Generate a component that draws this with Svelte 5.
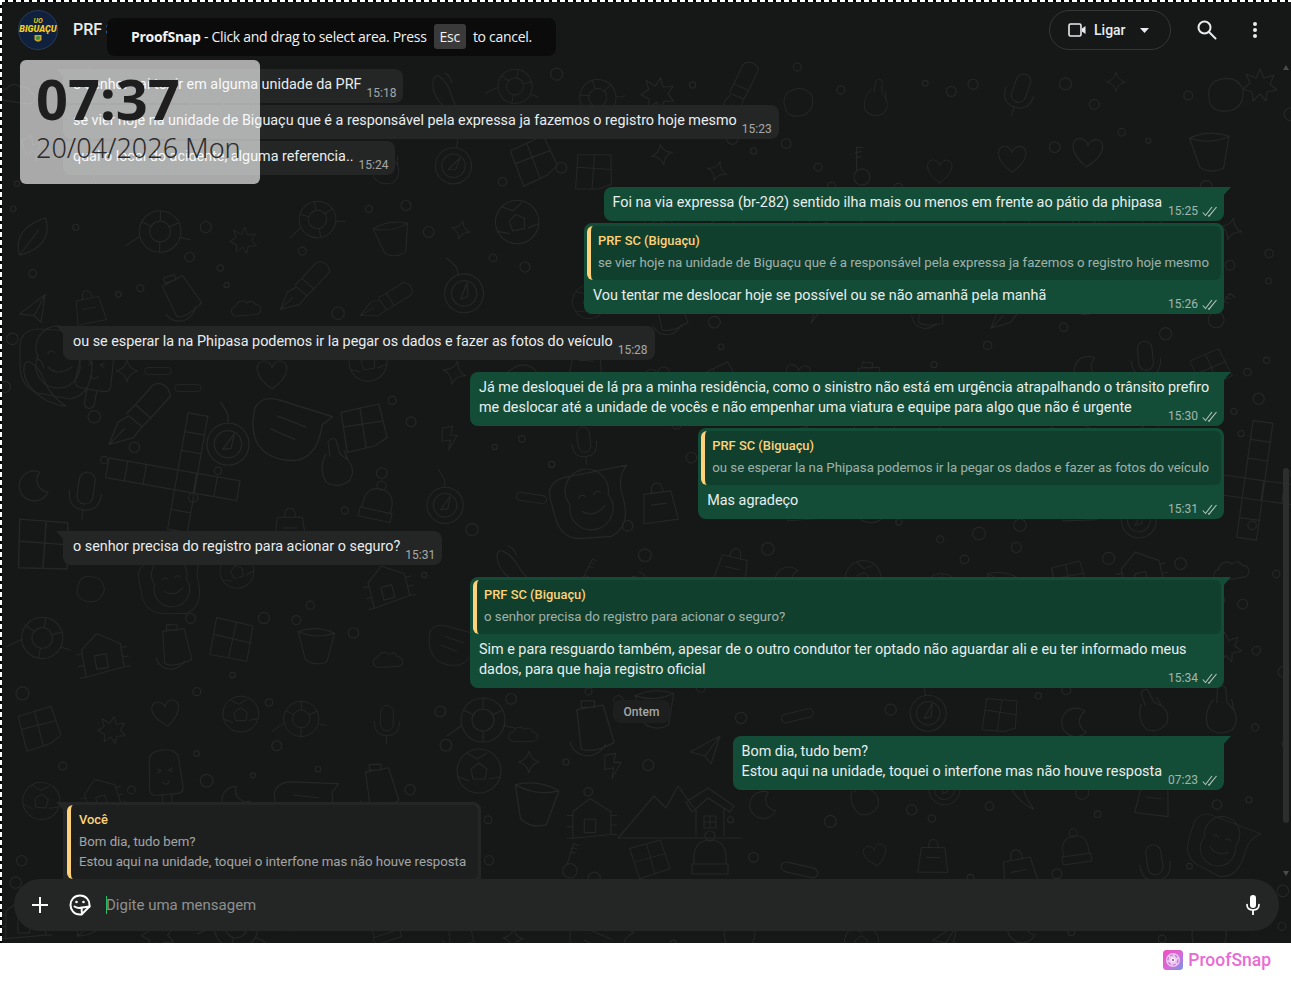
<script>
  const messages = [
    { side: 'in', tail: true, lines: ['o senhor vai ter ir em alguma unidade da PRF'], time: '15:18' },
    { side: 'in', lines: ['se vier hoje na unidade de Biguaçu que é a responsável pela expressa ja fazemos o registro hoje mesmo'], time: '15:23' },
    { side: 'in', lines: ['qual o local do acidente, alguma referencia..'], time: '15:24' },
    { side: 'out', tail: true, lines: ['Foi na via expressa (br-282) sentido ilha mais ou menos em frente ao pátio da phipasa'], time: '15:25' },
    {
      side: 'out',
      quote: { name: 'PRF SC (Biguaçu)', lines: ['se vier hoje na unidade de Biguaçu que é a responsável pela expressa ja fazemos o registro hoje mesmo'] },
      lines: ['Vou tentar me deslocar hoje se possível ou se não amanhã pela manhã'],
      time: '15:26'
    },
    { side: 'in', tail: true, lines: ['ou se esperar la na Phipasa podemos ir la pegar os dados e fazer as fotos do veículo'], time: '15:28' },
    {
      side: 'out',
      tail: true,
      width: 754,
      lines: [
        'Já me desloquei de lá pra a minha residência, como o sinistro não está em urgência atrapalhando o trânsito prefiro',
        'me deslocar até a unidade de vocês e não empenhar uma viatura e equipe para algo que não é urgente'
      ],
      time: '15:30'
    },
    {
      side: 'out',
      quote: { name: 'PRF SC (Biguaçu)', lines: ['ou se esperar la na Phipasa podemos ir la pegar os dados e fazer as fotos do veículo'] },
      lines: ['Mas agradeço'],
      time: '15:31'
    },
    { side: 'in', tail: true, lines: ['o senhor precisa do registro para acionar o seguro?'], time: '15:31' },
    {
      side: 'out',
      tail: true,
      width: 754,
      quote: { name: 'PRF SC (Biguaçu)', lines: ['o senhor precisa do registro para acionar o seguro?'] },
      lines: [
        'Sim e para resguardo também, apesar de o outro condutor ter optado não aguardar ali e eu ter informado meus',
        'dados, para que haja registro oficial'
      ],
      time: '15:34'
    },
    { date: 'Ontem' },
    { side: 'out', tail: true, lines: ['Bom dia, tudo bem?', 'Estou aqui na unidade, toquei o interfone mas não houve resposta'], time: '07:23' },
    {
      side: 'in',
      tail: true,
      quote: { name: 'Você', lines: ['Bom dia, tudo bem?', 'Estou aqui na unidade, toquei o interfone mas não houve resposta'] },
      lines: ['Ok'],
      time: '07:36'
    }
  ];

  // wallpaper doodles, local coords around 0,0
  const shapes = {
    star: 'M0-12Q2-2 12 0Q2 2 0 12Q-2 2-12 0Q-2-2 0-12Z',
    heart: 'M0 14C-20 0-17-14-8-14C-4-14 0-10 0-7C0-10 4-14 8-14C17-14 20 0 0 14Z',
    crossword: 'M-70 0h133v20h-133zM-51 0v20M-32 0v20M0 0v20M19 0v20M40 0v20M0-58h20v118h-20zM0-39h20M0-20h20M0 40h20',
    smile: 'M-42-18Q-42-36-22-36L42-32Q28-22 30 0Q30 30 8 34L-24 28Q-42 22-42 0ZM-24-8a22 22 0 1 0 40 0a22 22 0 1 0-40 0M-14-12q4-4 7 0M2-12q4-4 7 0M-14 2q10 10 24 0',
    compass: 'M-20 4a20 20 0 1 0 40 0a20 20 0 1 0-40 0M-13 4a13 13 0 1 0 26 0a13 13 0 1 0-26 0M-5 9L6-6L3 8ZM0-16v-8q-4-8-7-12',
    pen: 'M-30 24L-22 4L-12-2L0 8L-8 18ZM-14-4L-6-12L8 0L0 8M-6-12L10-30Q18-34 24-26L26-20L8 0M-30 24L-16 10',
    speech: 'M-34-10Q-30-22-14-20L34-12L26-4Q26 24 8 30Q-14 34-26 22Q-36 10-34-10ZM-14-6L12 0M-18 6L4 12',
    rubik: 'M-20-12L16-20L24 12L12 20L-14 26ZM-2-16L4 22M-18 2L20-4M-14 26L-20-12',
    hand: 'M-12-8Q-20 6-12 20Q0 28 12 18Q18 8 10-2L2-8M2-8L-2-22Q-6-26-10-20L-8-6M10-2L6-12',
    moon: 'M6-14A15 15 0 1 0 14 6A12 12 0 0 1 6-14Z',
    mic: 'M-8-16a8 8 0 0 1 16 0v16a8 8 0 0 1-16 0zM-16-4q0 18 16 18q16 0 16-18M0 14v10',
    popsicle: 'M-16-18Q-16-30 0-30Q16-30 16-18L18 12Q18 18 10 18H-10Q-18 18-18 12ZM-5 18v14a5 5 0 0 0 10 0V18M-8-10l4 2l-4 2M8-10l-4 2l4 2M-4 4q4 6 8 0',
    chili: 'M-20-16Q-22 4 2 18Q14 24 22 24Q6 14 0-2Q-4-14-14-20Q-18-22-20-16ZM-8-24q6 2 8 10',
    turtle: 'M-22 0a22 22 0 1 0 44 0a22 22 0 1 0-44 0M-11 0a11 11 0 1 0 22 0a11 11 0 1 0-22 0M0-22v11M0 11v11M-20-10L-9-5M20-10L9-5M-22 6L-36 16M22 6L32 8',
    ball: 'M-22 0a22 22 0 1 0 44 0a22 22 0 1 0-44 0M-8-2L0-8L8-2L6 8H-6ZM-12-18L-2-12L8-18M-20 6L-10 10M20 6L10 8',
    pot: 'M-20-14Q0-6 20-14L13 18Q0 24-11 16ZM-20-14Q0-22 20-14',
    cabin: 'M-18-14L0-28L22-14M-18-14V14L22 10V-14M-6-6h12v14h-12zM-24-10h6M-24 2h6M-24 14h6M22-10h6M22 0h6M22 10h6',
    scene: 'M-62 26L-26-16L-14-4L-2-26L14-4M-62 26H62M6-10L28-24L54-6L50 0L28-14L12 0ZM16-2V24M44-4V24M24 4h12v12h-12zM30 4v12M24 10h12',
    plane: 'M-15 2L15-14L6 14L0 6ZM0 6L15-14',
    bolt: 'M-8-12L4-14L2-4L10-4L0 14L2 2L-8 4Z',
    cloud: 'M-12 8a6 6 0 0 1 0-12a8 8 0 0 1 14-3a6 6 0 0 1 10 3a6 6 0 0 1 0 12Z',
    bottle: 'M-12-14L12-18L22 16Q4 26-8 22ZM-8-22h12v6h-12zM-18 16q4 12 18 12q10-2 14-10',
    key: 'M-8 12a8 8 0 1 0 16 0a8 8 0 1 0-16 0M-3 4L4-18L10-16M0-8h6M1-13h6',
    hat: 'M-16 6Q-18-18 0-18Q18-18 16 6ZM-18 6H18V16H-18ZM-5-22a4 4 0 1 0 10 0a4 4 0 1 0-10 0',
    bag: 'M-14-12H14L18 18H-18ZM-6-12Q-6-22 0-22Q6-22 6-12M-8 0H8',
    burst: 'M0-16L4-7L14-10L10-1L17 5L7 7L6 16L0 9L-7 16L-8 7L-17 4L-10-2L-14-11L-4-7Z',
    bean: 'M-10-14Q10-22 18-6Q20 12 4 16Q-16 18-16 2Q-18-8-10-14Z',
    pill: 'M-14-5h28a5 5 0 0 1 0 10h-28a5 5 0 0 1 0-10Z',
    leaf: 'M-18 14Q-18-14 18-16Q18 14-18 14ZM-18 14L8-6',
    grid: 'M-22-18L18-22L24 16L-16 22ZM-18 0L22-4M0-20L4 18'
  };

  const handPlaced = [
    ['smile', 62, 365, 0, 1], ['pen', 142, 418, 0, 1.1], ['crossword', 178, 470, 10, 1], ['compass', 228, 440, 0, 1.05],
    ['speech', 292, 425, 8, 1.15], ['heart', 272, 375, 0, 1], ['rubik', 362, 425, 0, 1.05], ['hand', 338, 462, 0, 1],
    ['chili', 44, 382, 0, 1], ['popsicle', 95, 372, 10, 1], ['moon', 34, 486, 0, 1], ['mic', 85, 496, 8, 1],
    ['star', 127, 371, 0, .9], ['pill', 158, 371, 0, .7], ['pill', 188, 388, 0, .7], ['bag', 290, 528, 0, .9],
    ['grid', 42, 545, 10, 1.2], ['turtle', 483, 720, 0, 1], ['ball', 479, 771, 0, 1], ['pot', 535, 803, 8, 1.1],
    ['cabin', 590, 825, 0, .95], ['scene', 680, 812, 0, 1], ['plane', 705, 750, 0, 1], ['bolt', 612, 766, 0, .9],
    ['cloud', 523, 735, 0, .8], ['bottle', 590, 725, 0, 1.1], ['star', 529, 762, 0, .9], ['moon', 763, 805, 0, .9],
    ['key', 570, 860, 0, .9], ['hat', 710, 858, 0, 1], ['burst', 1260, 85, 0, 1], ['bean', 1225, 95, 0, 1],
    ['star', 1116, 82, 0, .8], ['crossword', 1245, 478, 8, 1]
  ];

  function rng(seed) {
    return () => (seed = (seed * 16807) % 2147483647) / 2147483647;
  }

  function buildDoodles() {
    const r = rng(4711);
    const names = Object.keys(shapes).filter((n) => n !== 'crossword' && n !== 'scene');
    const placed = [...handPlaced];
    for (let y = 90; y < 950; y += 70) {
      for (let x = 30; x < 1290; x += 70) {
        const px = x + r() * 26 - 13, py = y + r() * 26 - 13;
        const name = names[Math.floor(r() * names.length)];
        const rot = r() * 40 - 20, scale = .75 + r() * .25;
        if (placed.some((p) => Math.hypot(p[1] - px, p[2] - py) < 56)) continue;
        placed.push([name, px, py, rot, scale]);
      }
    }
    const dots = [];
    for (let i = 0; i < 900 && dots.length < 220; i++) {
      const x = r() * 1291, y = 65 + r() * 880;
      if (placed.some((p) => Math.hypot(p[1] - x, p[2] - y) < 30)) continue;
      if (dots.some((d) => Math.hypot(d.x - x, d.y - y) < 18)) continue;
      dots.push({ x, y, r: 2.5 + r() * 4 });
    }
    return { placed, dots };
  }

  const { placed, dots } = buildDoodles();
</script>

<div class="page">
  <main class="chat">
    <svg class="wallpaper" width="1291" height="943" aria-hidden="true">
      <g fill="none" stroke="#252727" stroke-width="1.2" stroke-linecap="round" stroke-linejoin="round">
        {#each placed as [name, x, y, rot, scale]}
          <path d={shapes[name]} transform="translate({x} {y}) rotate({rot}) scale({scale})" />
        {/each}
        {#each dots as d}
          <circle cx={d.x} cy={d.y} r={d.r} />
        {/each}
      </g>
    </svg>

    <header class="topbar">
      <svg class="avatar" width="40" height="40" viewBox="0 0 40 40">
        <circle cx="20" cy="20" r="20" fill="#0f213c" />
        <circle cx="20" cy="20" r="19.5" fill="none" stroke="#2a3a55" />
        <text x="20" y="13" text-anchor="middle" class="logo-small">UO</text>
        <text x="20" y="22" text-anchor="middle" class="logo-big">BIGUAÇU</text>
        <path d="M16.500 25h7v5q-3.500 3.500-7 0z" fill="#c9a227" />
        <circle cx="20" cy="28" r="2" fill="#2f8f4e" />
      </svg>
      <span class="contact">PRF SC (Biguaçu)</span>
      <div class="spacer"></div>
      <button class="call">
        <svg width="18" height="14" viewBox="0 0 18 14" fill="none">
          <rect x="1" y="1" width="12" height="12" rx="1.500" stroke="#e9edef" stroke-width="1.600" />
          <path d="M14 5.500l3.500-2.500v8L14 8.500z" fill="#e9edef" />
        </svg>
        <span>Ligar</span>
        <svg class="caret" width="9" height="5" viewBox="0 0 9 5"><path d="M0 0h9L4.500 5z" fill="#e9edef" /></svg>
      </button>
      <button class="icon-btn search" aria-label="Pesquisar">
        <svg width="20" height="20" viewBox="0 0 20 20" fill="none" stroke="#e9edef" stroke-width="2">
          <circle cx="7.500" cy="7.500" r="6" />
          <path d="M12 12l6.500 6.500" stroke-linecap="round" />
        </svg>
      </button>
      <button class="icon-btn dots" aria-label="Menu">
        <svg width="4" height="16" viewBox="0 0 4 16" fill="#e9edef">
          <circle cx="2" cy="2" r="2" /><circle cx="2" cy="8" r="2" /><circle cx="2" cy="14" r="2" />
        </svg>
      </button>
    </header>

    <section class="messages">
      {#each messages as m, i}
        {#if m.date}
          <div class="date">{m.date}</div>
        {:else}
          <div class="row {m.side}" class:first={m.tail && i > 0}>
            <div class="bubble" class:tail={m.tail} class:has-quote={m.quote} style:width={m.width ? `${m.width}px` : null}>
              {#if m.quote}
                <div class="quote">
                  <div class="quote-name">{m.quote.name}</div>
                  {#each m.quote.lines as line}
                    <div class="quote-line">{line}</div>
                  {/each}
                </div>
              {/if}
              <div class="body">
                {#each m.lines as line, j}
                  {#if j > 0}<br />{/if}{line}
                {/each}<span class="meta-gap"></span>
              </div>
              <span class="meta">
                {m.time}
                {#if m.side === 'out'}
                  <svg width="15" height="11" viewBox="0 0 15 11" fill="none" stroke="#b5c4bc" stroke-width="1.100">
                    <path d="M.8 6.500l2.700 3L10 1M6 9.500L7 10.200 14.500 1" />
                  </svg>
                {/if}
              </span>
            </div>
          </div>
        {/if}
      {/each}
    </section>

    <footer class="composer">
      <button class="icon-btn plus" aria-label="Anexar">
        <svg width="16" height="16" viewBox="0 0 16 16" stroke="#fff" stroke-width="2"><path d="M8 0v16M0 8h16" /></svg>
      </button>
      <button class="icon-btn sticker" aria-label="Figurinhas">
        <svg width="22" height="22" viewBox="0 0 22 22" fill="none" stroke="#fff" stroke-width="2" stroke-linejoin="round" stroke-linecap="round">
          <path d="M11 1.500C17 1.500 20.500 6 20.500 11V12.500L12.500 20.500H11C5 20.500 1.500 16 1.500 11C1.500 6 5 1.500 11 1.500Z" />
          <path d="M5.500 12.500C8 14 11 14.200 13 13.500C12.500 15 12.500 17.500 13 20M13 13.500C15.500 13 18 12.800 20.500 12.500" />
          <circle cx="7.500" cy="8" r="1.300" fill="#fff" stroke="none" />
          <circle cx="14.500" cy="8" r="1.300" fill="#fff" stroke="none" />
        </svg>
      </button>
      <div class="input"><span class="cursor"></span>Digite uma mensagem</div>
      <button class="icon-btn mic" aria-label="Gravar">
        <svg width="14" height="20" viewBox="0 0 14 20" fill="#fff">
          <rect x="4" y="0" width="6" height="13" rx="3" />
          <path d="M1 9.500q0 5.500 6 5.500t6-5.500" fill="none" stroke="#fff" stroke-width="1.700" stroke-linecap="round" />
          <rect x="6.100" y="15" width="1.800" height="5" />
        </svg>
      </button>
    </footer>

    <div class="scrollbar"></div>
    <span class="scroll-arrow up"></span>
    <span class="scroll-arrow down"></span>

    <div class="clock">
      <div class="clock-time">07:37</div>
      <div class="clock-date">20/04/2026 Mon</div>
    </div>

    <div class="toast">
      <span><strong>ProofSnap</strong> - Click and drag to select area. Press</span>
      <kbd>Esc</kbd>
      <span>to cancel.</span>
    </div>

    <div class="marquee top"></div>
    <div class="marquee left"></div>
  </main>

  <div class="brand">
    <svg width="20" height="20" viewBox="0 0 20 20">
      <defs>
        <linearGradient id="brandFill" x1="0" y1="0" x2="1" y2="1">
          <stop offset="0" stop-color="#f04fc0" />
          <stop offset=".55" stop-color="#d56ad8" />
          <stop offset="1" stop-color="#6f97ea" />
        </linearGradient>
      </defs>
      <rect width="20" height="20" rx="3.500" fill="url(#brandFill)" />
      <circle cx="10" cy="10" r="7" fill="#eac7ee" />
      <circle cx="10" cy="10" r="5" fill="none" stroke="#c86fd4" stroke-width="1.200" stroke-dasharray="3 2" />
      <circle cx="10" cy="10" r="2.500" fill="#f6eafa" />
      <circle cx="10" cy="10" r="1" fill="#8a4a9c" />
    </svg>
    <span>ProofSnap</span>
  </div>
</div>

<style>
  :global(body) {
    margin: 0;
    background: #fff;
  }
  .page {
    width: 1291px;
    height: 990px;
    overflow: hidden;
    font-family: Roboto, 'Liberation Sans', sans-serif;
  }
  .chat {
    position: relative;
    display: flex;
    flex-direction: column;
    height: 943px;
    overflow: hidden;
    background: #161717;
    color: #e9edef;
  }
  .wallpaper {
    position: absolute;
    left: 0;
    top: 0;
  }
  .topbar {
    position: relative;
    display: flex;
    align-items: center;
    flex: none;
    height: 60px;
    padding: 0 34px 0 18px;
    box-sizing: border-box;
    background: #161717;
  }
  .avatar { flex: none; }
  .logo-small {
    font: italic 700 7px Roboto, sans-serif;
    fill: #e8c21c;
  }
  .logo-big {
    font: italic 900 9px Roboto, sans-serif;
    fill: #f2cd1f;
  }
  .contact {
    margin-left: 15px;
    font-size: 16px;
    font-weight: 500;
    position: relative;
    top: -1px;
  }
  .spacer { flex: 1; }
  button {
    padding: 0;
    border: none;
    background: none;
    color: inherit;
    font: inherit;
  }
  .call {
    display: flex;
    align-items: center;
    width: 122px;
    height: 40px;
    padding-left: 18px;
    box-sizing: border-box;
    border: 1px solid #353737;
    border-radius: 20px;
    font-size: 14px;
    font-weight: 500;
  }
  .call span { margin-left: 8px; }
  .call .caret { margin-left: 14px; }
  .icon-btn {
    display: flex;
    align-items: center;
    justify-content: center;
  }
  .search { margin-left: 26px; }
  .dots { margin-left: 36px; width: 4px; }
  .messages {
    position: relative;
    flex: 1;
    min-height: 0;
    overflow: hidden;
    display: flex;
    flex-direction: column;
    gap: 2px;
    padding: 9px 67px 0 63px;
  }
  .row {
    display: flex;
    flex: none;
  }
  .row.out { justify-content: flex-end; }
  .row.first { margin-top: 10px; }
  .bubble {
    position: relative;
    box-sizing: border-box;
    padding: 6px 9px 8px;
    border-radius: 8px;
    font-size: 14.36px;
    line-height: 20px;
    white-space: nowrap;
  }
  .in .bubble { background: #242626; padding-left: 10px; }
  .out .bubble { background: #144d37; }
  .bubble.has-quote { padding: 3px 3px 8px; }
  .in .bubble.has-quote { padding-left: 4px; }
  .has-quote .body { padding: 6px 6px 0; }
  .in .bubble.tail { border-top-left-radius: 0; }
  .out .bubble.tail { border-top-right-radius: 0; }
  .bubble.tail::after {
    content: '';
    position: absolute;
    top: 0;
    width: 8px;
    height: 9px;
    background: inherit;
  }
  .in .bubble.tail::after {
    left: -7px;
    clip-path: polygon(0 0, 100% 0, 100% 100%);
  }
  .out .bubble.tail::after {
    right: -7px;
    clip-path: polygon(0 0, 100% 0, 0 100%);
  }
  .meta-gap {
    display: inline-block;
    width: 33px;
    height: 1px;
  }
  .out .meta-gap { width: 53px; }
  .has-quote .meta-gap { width: 0; }
  .meta {
    position: absolute;
    right: 7px;
    bottom: 2px;
    display: flex;
    align-items: center;
    gap: 4px;
    font-size: 12px;
    line-height: 15px;
    color: rgba(255, 255, 255, .6);
  }
  .quote {
    padding: 4px 12px 7px 7px;
    border-left: 4px solid #ffd279;
    border-radius: 6px;
  }
  .in .quote { background: #1d1f1f; padding-left: 8px; }
  .out .quote { background: #113f2e; }
  .quote-name {
    font-size: 12.9px;
    font-weight: 500;
    line-height: 22px;
    color: #ffd279;
  }
  .quote-line {
    font-size: 13.22px;
    line-height: 20px;
    color: rgba(255, 255, 255, .6);
  }
  .quote-name + .quote-line { margin-top: 1px; }
  .date {
    flex: none;
    align-self: center;
    position: relative;
    left: -2px;
    margin: 10px 0 1px;
    padding: 0 11px;
    height: 23px;
    line-height: 25px;
    border-radius: 7px;
    background: #1d1f1f;
    font-size: 12px;
    font-weight: 500;
    color: #a6a8a8;
  }
  .composer {
    position: relative;
    display: flex;
    align-items: center;
    flex: none;
    height: 52px;
    margin: 0 12px 12px 14px;
    padding: 0 19px 0 18px;
    border-radius: 26px;
    background: #242626;
  }
  .sticker { margin-left: 21px; }
  .input {
    flex: 1;
    display: flex;
    align-items: center;
    margin-left: 15px;
    font-size: 15px;
    color: #8e9090;
  }
  .cursor {
    width: 1px;
    height: 18px;
    background: #21c063;
    margin-right: -1px;
  }
  .scrollbar {
    position: absolute;
    left: 1283px;
    top: 468px;
    width: 6px;
    height: 355px;
    border-radius: 3px;
    background: #2c2d2d;
  }
  .scroll-arrow {
    position: absolute;
    left: 1283px;
    width: 0;
    height: 0;
    border-left: 3px solid transparent;
    border-right: 3px solid transparent;
  }
  .scroll-arrow.up { top: 65px; border-bottom: 5px solid #4a4b4b; }
  .scroll-arrow.down { top: 871px; border-top: 5px solid #4a4b4b; }
  .clock {
    position: absolute;
    left: 20px;
    top: 60px;
    box-sizing: border-box;
    width: 240px;
    height: 124px;
    padding: 4px 16px;
    border-radius: 6px;
    background: rgba(255, 255, 255, .63);
    color: #1e1e1e;
    font-family: 'Noto Sans', sans-serif;
    white-space: nowrap;
  }
  .clock-time {
    font-size: 56px;
    font-weight: 700;
    line-height: 68px;
  }
  .clock-date {
    font-size: 27px;
    font-weight: 300;
    line-height: 32px;
    color: #2b2b2b;
  }
  .toast {
    position: absolute;
    left: 107px;
    top: 18px;
    display: flex;
    align-items: center;
    box-sizing: border-box;
    width: 449px;
    height: 38px;
    padding: 0 0 2px 24px;
    border-radius: 8px;
    background: #0b0b0b;
    color: #f2f2f2;
    font-size: 14px;
    font-family: 'Open Sans', sans-serif;
    letter-spacing: -.29px;
  }
  kbd {
    margin: 0 7px;
    padding: 3px 6px;
    border-radius: 3px;
    background: #3a3a3a;
    font: inherit;
  }
  .marquee {
    position: absolute;
    left: 0;
    top: 0;
  }
  .marquee.top {
    width: 100%;
    height: 2px;
    background: repeating-linear-gradient(90deg, #fff 0 5px, #000 5px 8px);
  }
  .marquee.left {
    width: 2px;
    height: 100%;
    background: repeating-linear-gradient(180deg, #fff 0 5px, #000 5px 8px);
  }
  .brand {
    display: flex;
    align-items: center;
    justify-content: flex-end;
    gap: 5px;
    height: 47px;
    padding: 0 20px 13px 0;
    box-sizing: border-box;
    color: #e96bd3;
    font-size: 17.5px;
    font-weight: 500;
  }
</style>
